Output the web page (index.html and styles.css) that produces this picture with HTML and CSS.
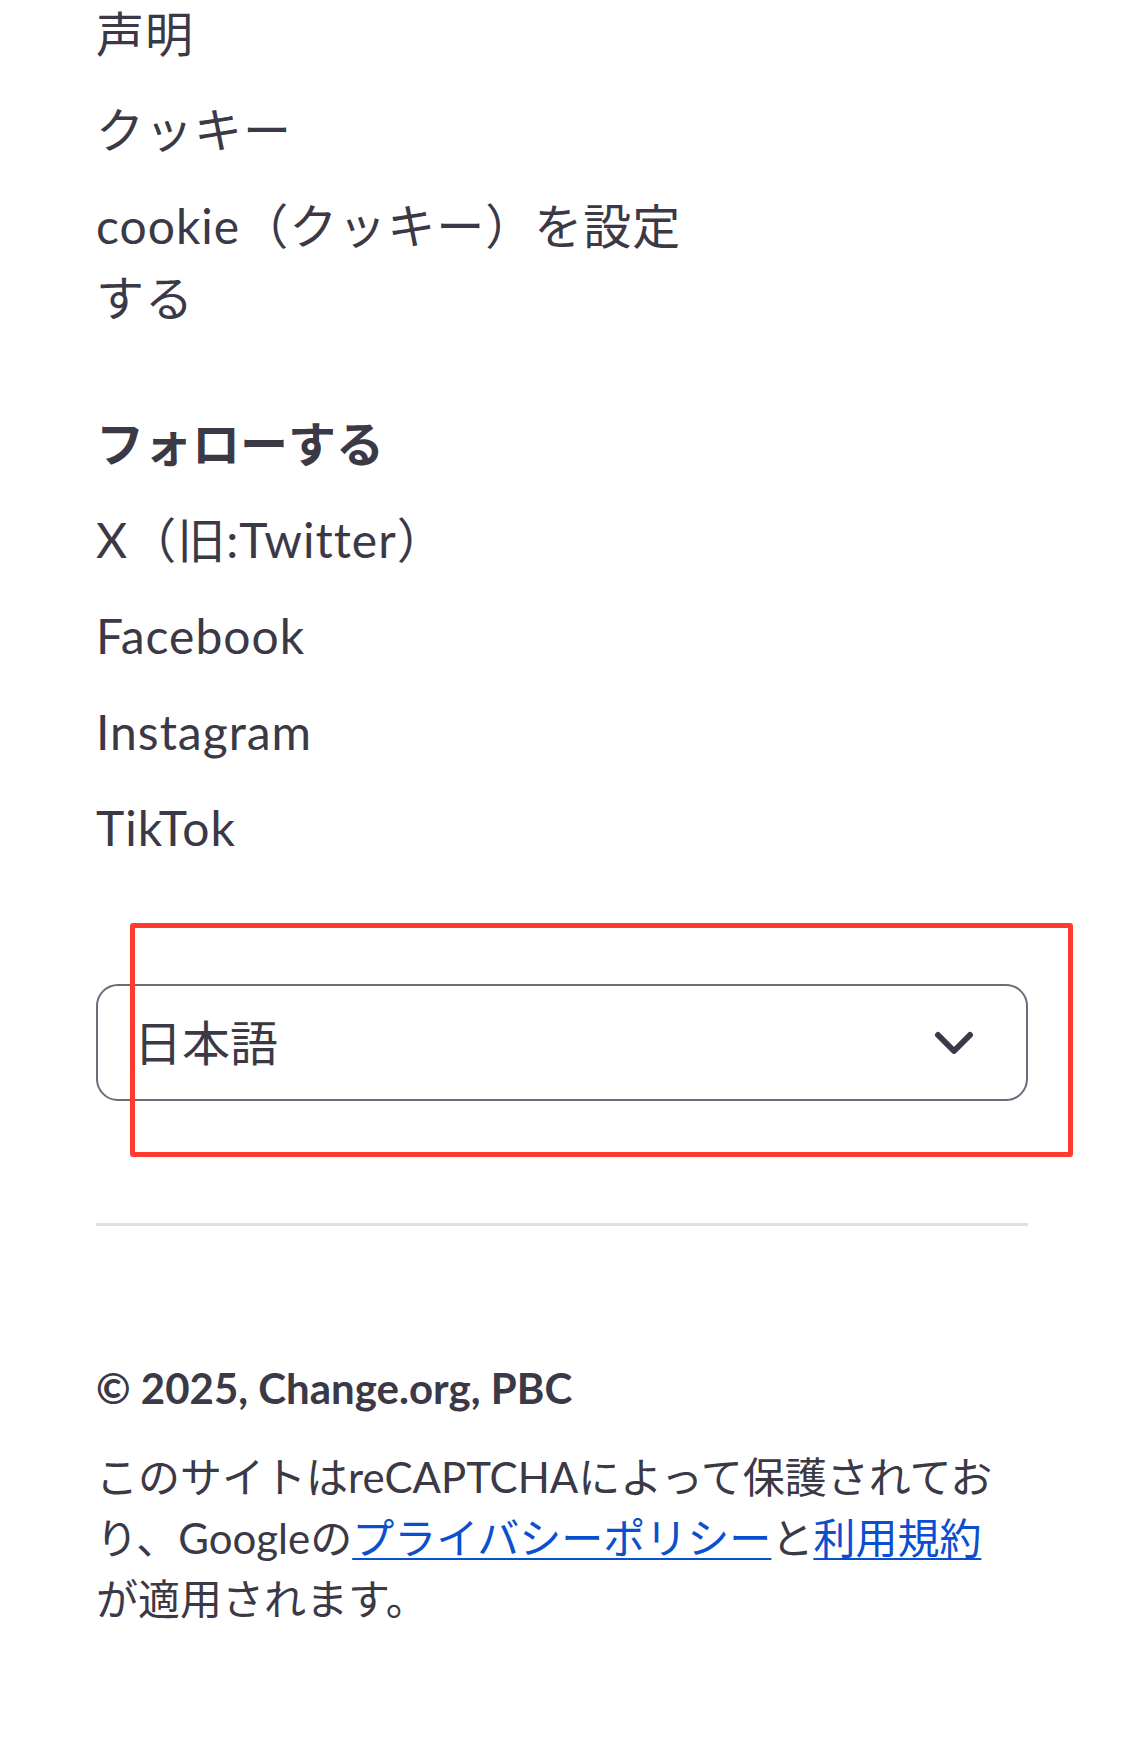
FILE: index.html
```html
<!DOCTYPE html>
<html lang="ja">
<head>
    <meta charset="UTF-8">
    <meta name="viewport" content="width=device-width, initial-scale=1.0">
    <title>Change.org フッター</title>
    <link rel="stylesheet" href="styles.css">
</head>
<body>
    <footer class="site-footer">
        <ul class="footer-links">
            <li><a href="#">声明</a></li>
            <li><a href="#">クッキー</a></li>
            <li><a href="#">cookie（クッキー）を設定する</a></li>
        </ul>

        <section class="footer-section">
            <h2>フォローする</h2>
            <ul class="footer-links">
                <li><a href="#">X（旧:Twitter）</a></li>
                <li><a href="#">Facebook</a></li>
                <li><a href="#">Instagram</a></li>
                <li><a href="#">TikTok</a></li>
            </ul>
        </section>

        <div class="lang-select">
            <span class="lang-label">日本語</span>
            <svg class="chevron" width="40" height="26" viewBox="0 0 40 26">
                <polyline points="4,4 20,20 36,4" fill="none" stroke="#3b3946" stroke-width="6" stroke-linecap="round" stroke-linejoin="round"/>
            </svg>
        </div>

        <hr class="divider">

        <p class="copyright">© 2025, Change.org, PBC</p>
        <p class="recaptcha">このサイトはreCAPTCHAによって保護されており、Googleの<a href="#">プライバシーポリシー</a>と<a href="#">利用規約</a>が適用されます。</p>
    </footer>

    <div class="annotation"></div>
</body>
</html>
```

FILE: styles.css
```css
body {
    margin: 0;
    padding: 0;
    background: #fff;
    color: #3b3946;
    font-family: Lato, "Noto Sans CJK JP", sans-serif;
    position: relative;
}
.site-footer {
    padding: 0 97px 120px 96px;
}
.footer-links {
    list-style: none;
    margin: -2px 0 0 0;
    padding: 0;
    max-width: 600px;
}
.footer-links li {
    font-size: 48px;
    line-height: 72px;
    letter-spacing: 1px;
}
.footer-links li + li {
    margin-top: 24px;
}
.footer-links a {
    color: #3b3946;
    text-decoration: none;
}
.footer-section {
    margin-top: 74px;
}
.footer-section h2 {
    font-size: 48px;
    line-height: 72px;
    font-weight: 700;
    margin: 0 0 24px 0;
}
.footer-section .footer-links {
    margin-top: 0;
}
.lang-select {
    margin-top: 120px;
    height: 117px;
    box-sizing: border-box;
    border: 2px solid #6e6a7a;
    border-radius: 22px;
    display: flex;
    align-items: center;
    justify-content: space-between;
    padding: 0 52px 0 36px;
}
.lang-label {
    font-size: 48px;
    line-height: 72px;
}
.chevron {
    display: block;
    margin-top: 2px;
}
.divider {
    border: none;
    height: 3px;
    background: #dfdee4;
    margin: 122px 0 0 0;
}
.copyright {
    font-size: 42px;
    line-height: 60px;
    font-weight: 700;
    margin: 132px 0 0 0;
}
.recaptcha {
    font-size: 42px;
    line-height: 61px;
    margin: 29px 0 0 0;
    max-width: 900px;
}
.recaptcha a {
    color: #0b4fcf;
    text-decoration: underline;
    text-underline-offset: 4px;
    text-decoration-thickness: 2px;
}
.annotation {
    position: absolute;
    left: 130px;
    top: 923px;
    width: 943px;
    height: 234px;
    box-sizing: border-box;
    border: 5px solid #ff3b30;
    border-radius: 3px;
}
```
